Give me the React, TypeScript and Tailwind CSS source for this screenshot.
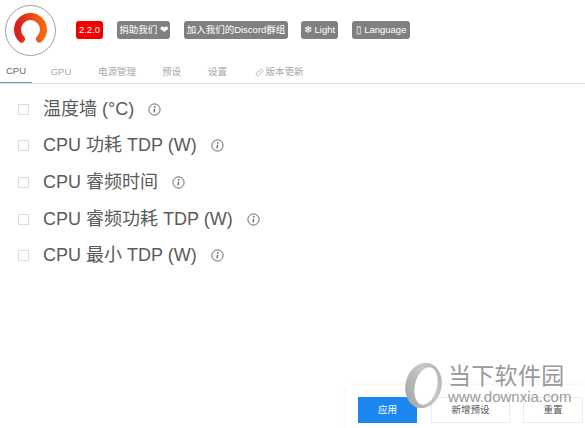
import React from "react";

const font = { fontFamily: '"Liberation Sans", "Noto Sans CJK SC", sans-serif' };

function Logo() {
  return (
    <div className="w-[51px] h-[51px] rounded-full border-[1.5px] border-[#a0a0a0] bg-white flex items-center justify-center shrink-0">
      <svg width="33" height="30" viewBox="0 0 33 30" className="mb-[5px]">
        <defs>
          <linearGradient id="g" x1="0" x2="1" y1="0" y2="0">
            <stop offset="0" stopColor="#d9201f" />
            <stop offset="1" stopColor="#f9670f" />
          </linearGradient>
        </defs>
        <path d="M7.5 26 A13 13 0 1 1 25.5 26" fill="none" stroke="url(#g)" strokeWidth="7" strokeLinecap="round" />
      </svg>
    </div>
  );
}

function Badge({ children, className = "" }: { children: React.ReactNode; className?: string }) {
  return (
    <span className={`h-[18px] rounded-[3px] text-white text-[9.5px] leading-[18px] flex items-center justify-center whitespace-nowrap ${className}`}>
      {children}
    </span>
  );
}

function Info() {
  return (
    <svg width="13" height="13" viewBox="0 0 13 13" className="shrink-0">
      <circle cx="6.5" cy="6.5" r="5.6" fill="none" stroke="#666" strokeWidth="1" />
      <circle cx="6.8" cy="3.9" r="0.8" fill="#555" />
      <path d="M6.6 5.8 L6 9.3" stroke="#555" strokeWidth="1.2" />
    </svg>
  );
}

function Row({ label }: { label: string }) {
  return (
    <div className="h-[36.6px] flex items-center">
      <span className="w-[11px] h-[11px] border border-[#dcdcdc] bg-white shrink-0" />
      <span className="ml-[14px] mr-[14px] text-[18px] text-[#5a5a5a] whitespace-nowrap">{label}</span>
      <Info />
    </div>
  );
}

function Tab({ children, active, className = "" }: { children: React.ReactNode; active?: boolean; className?: string }) {
  return (
    <div className={`h-full pt-[2px] flex items-center justify-center text-[9.5px] whitespace-nowrap ${active ? "text-[#666] border-b border-[#4f9bd9] -mb-px" : "text-[#a8a8a8]"} ${className}`}>
      {children}
    </div>
  );
}

export default function App() {
  return (
    <div className="relative w-[585px] h-[428px] bg-white overflow-hidden" style={font}>
      <header className="flex items-center pl-[5px] pt-[5px] h-[55px]">
        <Logo />
        <div className="flex items-center ml-[20px] mt-[-1px]">
          <Badge className="w-[27px] bg-[#f00000]">2.2.0</Badge>
          <Badge className="w-[53px] ml-[14px] bg-[#808080]">捐助我们 ❤</Badge>
          <Badge className="w-[104px] ml-[14px] bg-[#808080]">加入我们的Discord群组</Badge>
          <Badge className="w-[37px] ml-[13px] bg-[#808080]">❄ Light</Badge>
          <Badge className="w-[58px] ml-[14px] bg-[#808080]">▯ Language</Badge>
        </div>
      </header>
      <nav className="flex h-[25px] mt-[4px] border-b border-[#e4e4e4]">
        <Tab active className="w-[32px]">CPU</Tab>
        <Tab className="w-[30px] ml-[14px]">GPU</Tab>
        <Tab className="w-[38px] ml-[22px]">电源管理</Tab>
        <Tab className="w-[19px] ml-[26px]">预设</Tab>
        <Tab className="w-[19px] ml-[27px]">设置</Tab>
        <Tab className="w-[49px] ml-[28px]">
          <svg width="9" height="9" viewBox="0 0 24 24" fill="none" stroke="#a8a8a8" strokeWidth="2" className="mr-[1px]">
            <path d="M10 14a5 5 0 0 0 7 0l3-3a5 5 0 0 0-7-7l-1.5 1.5" />
            <path d="M14 10a5 5 0 0 0-7 0l-3 3a5 5 0 0 0 7 7l1.5-1.5" />
          </svg>
          版本更新
        </Tab>
      </nav>
      <main className="pl-[18px] pt-[7px]">
        <Row label="温度墙 (°C)" />
        <Row label="CPU 功耗 TDP (W)" />
        <Row label="CPU 睿频时间" />
        <Row label="CPU 睿频功耗 TDP (W)" />
        <Row label="CPU 最小 TDP (W)" />
      </main>

      {/* floating footer */}
      <div className="absolute left-[347px] top-[385px] w-[238px] h-[43px] bg-white/60 shadow-[0_0_6px_rgba(0,0,0,0.06)] pl-[11px] pt-[12px] flex items-start">
        <button className="w-[59px] h-[26px] bg-[#1d87f0] text-white text-[9.5px]">应用</button>
        <button className="w-[79px] h-[26px] ml-[14px] border border-[#ececec] bg-white/40 text-[#555] text-[9.5px]">新增预设</button>
        <button className="w-[60px] h-[26px] ml-[13px] border border-[#ececec] bg-white/40 text-[#555] text-[9.5px]">重置</button>
      </div>

      {/* watermark */}
      <div className="absolute left-[403px] top-[362px] flex pointer-events-none">
        <svg width="41" height="47" viewBox="0 0 41 47" className="shrink-0">
          <defs>
            <linearGradient id="w" x1="0" x2="1" y1="1" y2="0">
              <stop offset="0" stopColor="#9f9f9f" />
              <stop offset="0.6" stopColor="#c8c8c8" />
              <stop offset="1" stopColor="#adadad" />
            </linearGradient>
          </defs>
          <ellipse cx="20.5" cy="23.5" rx="18" ry="23" fill="url(#w)" transform="rotate(14 20.5 23.5)" />
          <ellipse cx="23" cy="24" rx="11" ry="19" fill="#ffffff" transform="rotate(14 23 24)" />
        </svg>
        <div className="ml-[4px]">
          <div className="text-[23px] leading-[27px] mt-[1px] tracking-[0.3px] text-[#999] whitespace-nowrap">当下软件园</div>
          <div className="text-[15px] leading-[17px] mt-[-2px] text-[#9a9a9a] whitespace-nowrap">www.downxia.com</div>
        </div>
      </div>
    </div>
  );
}
